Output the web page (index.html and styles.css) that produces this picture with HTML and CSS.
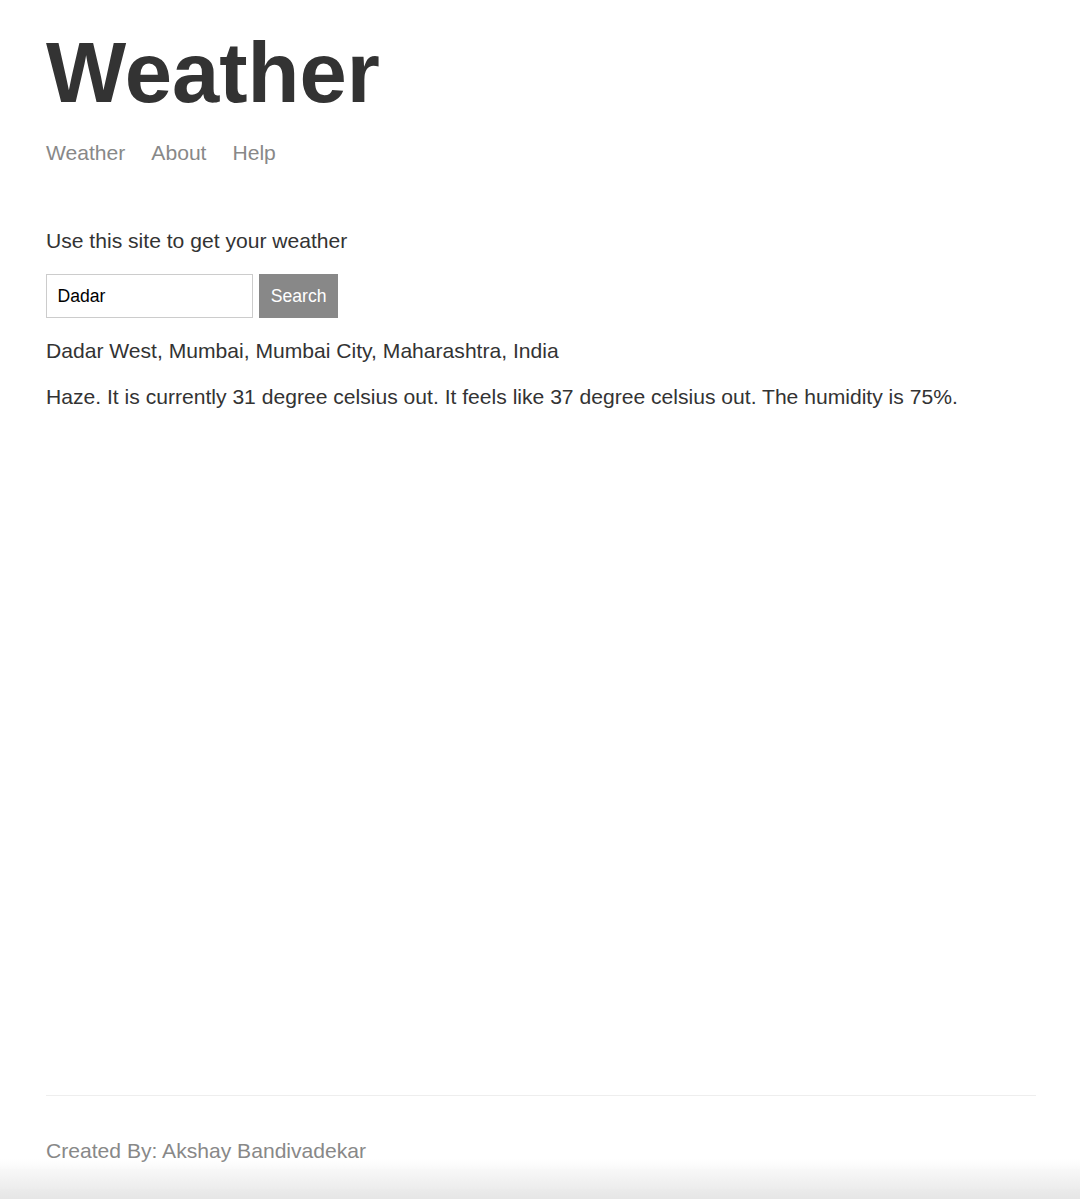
FILE: index.html
```html
<!DOCTYPE html>
<html lang="en">
<head>
<meta charset="utf-8">
<title>Weather</title>
<link rel="stylesheet" href="styles.css">
</head>
<body>
<header class="site-header">
  <h1 class="title">Weather</h1>
  <nav class="nav">
    <a class="nav-link" href="#">Weather</a>
    <a class="nav-link" href="#">About</a>
    <a class="nav-link" href="#">Help</a>
  </nav>
</header>
<main class="main-content">
  <p class="intro">Use this site to get your weather</p>
  <form class="search-form">
    <input class="search-input" type="text" value="Dadar" placeholder="Location">
    <button class="search-button" type="button">Search</button>
  </form>
  <p class="location">Dadar West, Mumbai, Mumbai City, Maharashtra, India</p>
  <p class="forecast">Haze. It is currently 31 degree celsius out. It feels like 37 degree celsius out. The humidity is 75%.</p>
</main>
<footer class="site-footer">
  <p class="credit">Created By: Akshay Bandivadekar</p>
</footer>
<div class="bottom-fade"></div>
</body>
</html>
```
FILE: styles.css
```css
html, body {
  margin: 0;
}
body {
  box-sizing: border-box;
  min-height: 100vh;
  padding: 0 44px 0 46px;
  display: flex;
  flex-direction: column;
  font-family: "Liberation Sans", Arial, sans-serif;
  color: #333;
  background: #fff;
}
.site-header {
  padding-top: 24px;
}
.title {
  margin: 0;
  font-size: 85px;
  line-height: 97px;
  font-weight: bold;
}
.nav {
  margin-top: 20px;
  display: flex;
  gap: 26px;
  font-size: 21.1px;
  line-height: 24px;
}
.nav-link {
  color: #888;
  text-decoration: none;
}
.main-content {
  flex-grow: 1;
  margin-top: 64px;
  font-size: 21.1px;
  line-height: 24px;
}
.intro {
  margin: 0 0 21px;
}
.search-form {
  display: flex;
  gap: 6px;
  margin: 0;
}
.search-input {
  box-sizing: border-box;
  width: 207px;
  height: 44px;
  padding: 0 10.5px;
  border: 1px solid #ccc;
  font-family: "Liberation Sans", Arial, sans-serif;
  font-size: 17.6px;
  color: #000;
  outline: none;
  margin: 0;
}
.search-button {
  box-sizing: border-box;
  height: 44px;
  padding: 0 10.8px;
  border: 1px solid #888;
  background: #888;
  color: #fff;
  font-family: "Liberation Sans", Arial, sans-serif;
  font-size: 17.6px;
  margin: 0;
  cursor: pointer;
}
.location {
  margin: 21px 0 0;
}
.forecast {
  margin: 22px 0 0;
}
.site-footer {
  border-top: 1px solid #eee;
  padding: 43px 0 36px;
  color: #888;
  font-size: 21.1px;
  line-height: 24px;
}
.credit {
  margin: 0;
}
.bottom-fade {
  position: fixed;
  left: 0;
  right: 0;
  bottom: 0;
  height: 40px;
  background: linear-gradient(to bottom, rgba(230,230,230,0), rgba(228,228,228,0.95));
  pointer-events: none;
}
```
